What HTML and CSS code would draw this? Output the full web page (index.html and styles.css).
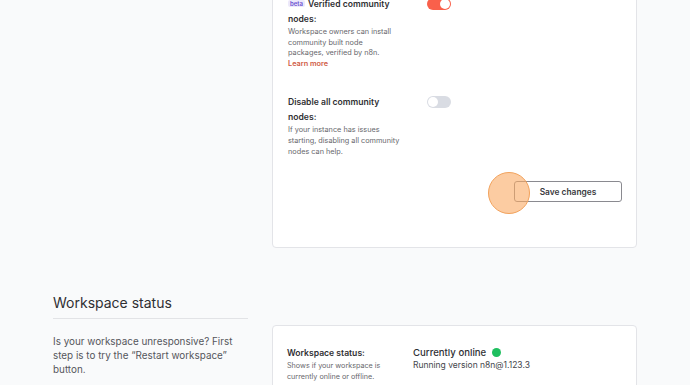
FILE: index.html
```html
<!DOCTYPE html>
<html lang="en">
<head>
    <meta charset="UTF-8">
    <meta name="viewport" content="width=device-width, initial-scale=1.0">
    <title>Settings</title>
    <link rel="stylesheet" href="styles.css">
</head>
<body>
<div class="page">
    <div class="section">
        <div class="side"></div>
        <div class="card">
            <div class="setting">
                <div class="setting-text">
                    <div class="setting-title"><span class="badge">beta</span><span>Verified community</span> nodes:</div>
                    <div class="setting-desc">Workspace owners can install<br>community built node<br>packages, verified by n8n.</div>
                    <a class="learn-more" href="#">Learn more</a>
                </div>
                <div class="toggle on"><span class="knob"></span></div>
            </div>
            <div class="setting">
                <div class="setting-text">
                    <div class="setting-title">Disable all community nodes:</div>
                    <div class="setting-desc">If your instance has issues<br>starting, disabling all community<br>nodes can help.</div>
                </div>
                <div class="toggle"><span class="knob"></span></div>
            </div>
            <div class="card-footer">
                <button class="btn">Save changes</button>
                <span class="click-marker"></span>
            </div>
        </div>
    </div>

    <div class="section status-section">
        <div class="side">
            <h2>Workspace status</h2>
            <p>Is your workspace unresponsive? First step is to try the “Restart workspace” button.</p>
        </div>
        <div class="side-right">
            <div class="card status-card">
                <div class="status-label">
                    <div class="setting-title">Workspace status:</div>
                    <div class="setting-desc">Shows if your workspace is<br>currently online or offline.</div>
                </div>
                <div class="status-value">
                    <div class="status-online">Currently online <span class="dot"></span></div>
                    <div class="status-version">Running version n8n@1.123.3</div>
                </div>
            </div>
        </div>
    </div>
</div>
</body>
</html>
```

FILE: styles.css
```css
body {
    margin: 0;
    background-color: #f9fafb;
    font-family: Inter, "Noto Sans", sans-serif;
    color: #2f2f33;
    overflow: hidden;
}

.page {
    padding: 0 53px;
    margin-top: -21px; /* scrolled down a bit */
}

.section {
    display: grid;
    grid-template-columns: 195px 1fr;
    gap: 24px;
}

.card {
    background-color: #fff;
    border: 1px solid #e3e4e8;
    border-radius: 4px;
    padding: 17px 14px 45px 15px;
}

.setting {
    display: flex;
    align-items: flex-start;
    margin-bottom: 26px;
}

.setting + .setting {
    margin-bottom: 24px;
}

.setting-text {
    width: 113px;
}

.setting-title {
    font-size: 8.6px;
    font-weight: 600;
    line-height: 15px;
    color: #2f2f33;
}

.badge {
    display: inline-block;
    background-color: #ece8fb;
    color: #6a4fcf;
    font-size: 6px;
    font-weight: 600;
    line-height: 7px;
    padding: 0 2px;
    margin-right: 3px;
    border-radius: 2px;
    vertical-align: 1px;
}

.setting-desc {
    font-size: 7.3px;
    line-height: 10.6px;
    color: #67676c;
    white-space: nowrap;
}

.learn-more {
    display: block;
    font-size: 7.3px;
    line-height: 10.6px;
    font-weight: 600;
    color: #cf5a44;
    text-decoration: none;
}

.toggle {
    margin-left: 26px;
    margin-top: 1px;
    width: 24px;
    height: 12px;
    border-radius: 6px;
    background-color: #d9dce3;
    position: relative;
}

.toggle .knob {
    position: absolute;
    top: 1px;
    left: 1px;
    width: 10px;
    height: 10px;
    border-radius: 50%;
    background-color: #fff;
}

.toggle.on {
    background-color: #f9604b;
}

.toggle.on .knob {
    left: 13px;
}

.card-footer {
    display: flex;
    justify-content: flex-end;
    position: relative;
}

.btn {
    width: 108px;
    height: 21px;
    background-color: #fff;
    border: 1px solid #8a8a90;
    border-radius: 3px;
    font-family: inherit;
    font-size: 8.4px;
    font-weight: 600;
    color: #3a3a40;
    cursor: pointer;
}

.click-marker {
    position: absolute;
    right: 92px;
    top: -9px;
    width: 40px;
    height: 40px;
    border-radius: 50%;
    background-color: rgba(250, 170, 100, 0.6);
    border: 1px solid #f2a25c;
}

.status-section {
    margin-top: 46px;
}

.side h2 {
    margin: 0;
    font-size: 14px;
    font-weight: 400;
    line-height: 18px;
    color: #2f2f33;
    padding-bottom: 6px;
    border-bottom: 1px solid #e2e3e6;
}

.side p {
    margin: 15px 0 0;
    font-size: 9.9px;
    line-height: 14px;
    color: #55565c;
}

.side-right {
    padding-top: 31px;
}

.status-card {
    display: flex;
    padding: 20px 14px 20px 14px;
}

.status-label {
    width: 126px;
}

.status-label .setting-desc {
    font-size: 7.2px;
}

.status-online {
    font-size: 9.6px;
    font-weight: 500;
    line-height: 13px;
    color: #2f2f33;
    display: flex;
    align-items: center;
}

.dot {
    display: inline-block;
    width: 9px;
    height: 9px;
    border-radius: 50%;
    background-color: #1fbf5f;
    margin-left: 6px;
}

.status-version {
    font-size: 8.5px;
    line-height: 12px;
    color: #45464c;
}
```
